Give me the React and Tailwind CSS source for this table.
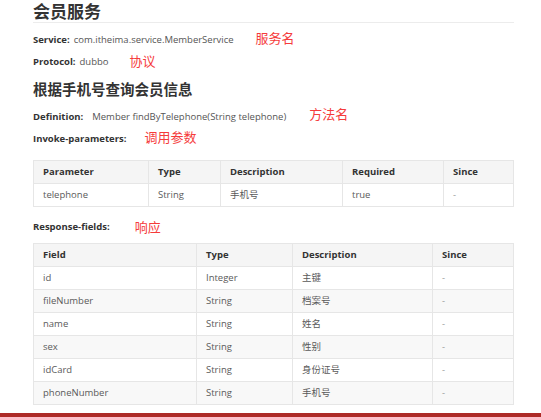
import React from "react";

const params = [
  { name: "telephone", type: "String", desc: "手机号", required: "true", since: "-" },
];

const fields = [
  { name: "id", type: "Integer", desc: "主键" },
  { name: "fileNumber", type: "String", desc: "档案号" },
  { name: "name", type: "String", desc: "姓名" },
  { name: "sex", type: "String", desc: "性别" },
  { name: "idCard", type: "String", desc: "身份证号" },
  { name: "phoneNumber", type: "String", desc: "手机号" },
];

function Note({ children, className = "" }) {
  return (
    <span className={`text-[13px] leading-[16px] text-[#f53b3b] font-['Noto_Sans_CJK_SC',sans-serif] ${className}`}>
      {children}
    </span>
  );
}

const th = "h-[23px] border border-[#e6e6e6] px-[9px] text-left font-bold text-[#333]";
const td = "h-[23px] border border-[#e6e6e6] px-[9px] text-[#5a5a5a]";

export default function App() {
  return (
    <div className="flex h-[417px] w-[541px] flex-col overflow-hidden bg-white font-['Open_Sans','Noto_Sans_CJK_SC',sans-serif] text-[9.5px]">
      <div className="flex-1 overflow-hidden pl-[33px]">
        <div className="w-[481px]">
          <h1 className="border-b border-[#ececec] pt-[2px] text-[17px] font-bold leading-[20px] text-[#333]">
            会员服务
          </h1>

          <div className="mt-[9px] flex items-center leading-[16px]">
            <span className="font-bold text-[#333]">Service:</span>
            <span className="ml-[4px] text-[#555]">com.itheima.service.MemberService</span>
            <Note className="ml-[22px] -mt-[4px]">服务名</Note>
          </div>

          <div className="mt-[6px] flex items-center leading-[16px]">
            <span className="font-bold text-[#333]">Protocol:</span>
            <span className="ml-[4px] text-[#555]">dubbo</span>
            <Note className="ml-[21px] -mt-[2px]">协议</Note>
          </div>

          <h2 className="mt-[10px] text-[14.5px] font-bold leading-[20px] text-[#333]">
            根据手机号查询会员信息
          </h2>

          <div className="mt-[9px] flex items-center leading-[16px]">
            <span className="font-bold text-[#333]">Definition:</span>
            <span className="ml-[9px] text-[#555]">Member findByTelephone(String telephone)</span>
            <Note className="ml-[23px] -mt-[6px]">方法名</Note>
          </div>

          <div className="mt-[6px] flex items-center leading-[16px]">
            <span className="font-bold text-[#333]">Invoke-parameters:</span>
            <Note className="ml-[18px] -mt-[5px]">调用参数</Note>
          </div>

          <table className="mt-[13px] w-[481px] table-fixed border-collapse">
            <colgroup>
              <col className="w-[115px]" />
              <col className="w-[72px]" />
              <col className="w-[122px]" />
              <col className="w-[101px]" />
              <col />
            </colgroup>
            <thead>
              <tr className="bg-[#f5f5f5]">
                <th className={th}>Parameter</th>
                <th className={th}>Type</th>
                <th className={th}>Description</th>
                <th className={th}>Required</th>
                <th className={th}>Since</th>
              </tr>
            </thead>
            <tbody>
              {params.map((p) => (
                <tr key={p.name}>
                  <td className={td}>{p.name}</td>
                  <td className={td}>{p.type}</td>
                  <td className={td}>{p.desc}</td>
                  <td className={td}>{p.required}</td>
                  <td className={`${td} text-[#999]`}>{p.since}</td>
                </tr>
              ))}
            </tbody>
          </table>

          <div className="mt-[12px] flex items-center leading-[16px]">
            <span className="font-bold text-[#333]">Response-fields:</span>
            <Note className="ml-[25px]">响应</Note>
          </div>

          <table className="mt-[8px] w-[481px] table-fixed border-collapse">
            <colgroup>
              <col className="w-[163px]" />
              <col className="w-[96px]" />
              <col className="w-[140px]" />
              <col />
            </colgroup>
            <thead>
              <tr className="bg-[#f5f5f5]">
                <th className={th}>Field</th>
                <th className={th}>Type</th>
                <th className={th}>Description</th>
                <th className={th}>Since</th>
              </tr>
            </thead>
            <tbody>
              {fields.map((f, i) => (
                <tr key={f.name} className={i % 2 === 1 ? "bg-[#f8f8f8]" : "bg-white"}>
                  <td className={td}>{f.name}</td>
                  <td className={td}>{f.type}</td>
                  <td className={td}>{f.desc}</td>
                  <td className={`${td} text-[#999]`}>-</td>
                </tr>
              ))}
            </tbody>
          </table>
        </div>
      </div>
      <div className="h-[4px] bg-[#ae2a27]" />
    </div>
  );
}
